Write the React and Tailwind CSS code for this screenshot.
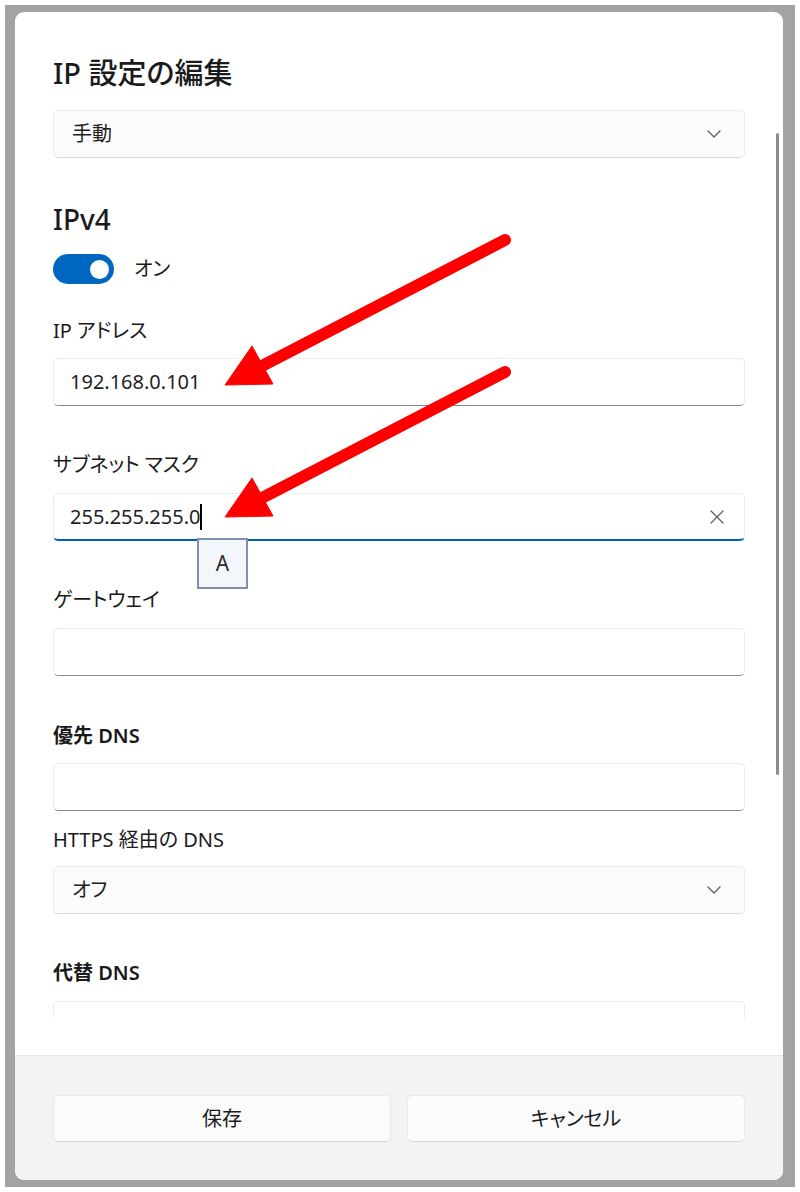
import React from "react";

function Chevron() {
  return (
    <svg width="14" height="8" viewBox="0 0 14 8" fill="none">
      <path d="M1 1 L7 7 L13 1" stroke="#5f5f5f" strokeWidth="1.3" strokeLinecap="round" strokeLinejoin="round" />
    </svg>
  );
}

function Label({ children, bold, className = "" }) {
  return (
    <div className={`h-[28px] leading-[28px] text-[20px] text-[#1a1a1a] ${bold ? "font-semibold" : ""} ${className}`}>
      {children}
    </div>
  );
}

function Input({ children, className = "", focused }) {
  return (
    <div
      className={`h-[48px] rounded-[5px] bg-white border border-[#ececec] ${
        focused ? "border-b-2 border-b-[#005fb8]" : "border-b-[#8a8a8a]"
      } flex items-center pl-[16px] pr-[20px] text-[20px] text-[#1f1f1f] ${className}`}
    >
      {children}
    </div>
  );
}

function Select({ value, className = "" }) {
  return (
    <div
      className={`h-[48px] rounded-[5px] bg-[#fbfbfb] border border-[#ececec] border-b-[#dadada] flex items-center justify-between pl-[18px] pr-[23px] text-[20px] text-[#1f1f1f] ${className}`}
    >
      <span>{value}</span>
      <Chevron />
    </div>
  );
}

export default function App() {
  return (
    <div className="relative w-[800px] h-[1192px] bg-white p-[5px] font-['Noto_Sans','Noto_Sans_CJK_JP',sans-serif] [font-feature-settings:'palt'] text-[#1a1a1a]">
      <div className="w-[790px] h-[1182px] bg-[#a3a3a5] pl-[10px] pt-[7px]">
        <div className="relative w-[768px] h-[1168px] bg-white rounded-[9px] overflow-hidden flex flex-col">
          <div className="h-[1006px] overflow-hidden px-[38px] pt-[41px] flex flex-col">
            <div className="h-[40px] leading-[40px] text-[29px] font-medium text-[#1b1b1b]">IP 設定の編集</div>
            <Select value="手動" className="mt-[17px] shrink-0" />
            <div className="mt-[43px] h-[36px] leading-[36px] text-[28px] font-medium text-[#1b1b1b]">IPv4</div>
            <div className="mt-[17px] h-[30px] flex items-center gap-[20px]">
              <div className="w-[61px] h-[30px] rounded-full bg-[#0067c0] flex items-center justify-end pr-[5px]">
                <div className="w-[19px] h-[19px] rounded-full bg-white" />
              </div>
              <span className="text-[20px] text-[#1b1b1b]">オン</span>
            </div>
            <Label className="mt-[33px]">IP アドレス</Label>
            <Input className="mt-[13px] shrink-0">192.168.0.101</Input>
            <Label className="mt-[45px]">サブネット マスク</Label>
            <Input className="mt-[14px] shrink-0 justify-between" focused>
              <span className="flex items-center">
                255.255.255.0
                <span className="inline-block w-[1.5px] h-[26px] bg-black" />
              </span>
              <svg width="14" height="14" viewBox="0 0 14 14" fill="none">
                <path d="M1 1 L13 13 M13 1 L1 13" stroke="#5f5f5f" strokeWidth="1.3" strokeLinecap="round" />
              </svg>
            </Input>
            <Label className="mt-[45px]">ゲートウェイ</Label>
            <Input className="mt-[14px] shrink-0" />
            <Label bold className="mt-[46px]">優先 DNS</Label>
            <Input className="mt-[13px] shrink-0 h-[47px]" />
            <Label className="mt-[15px]">HTTPS 経由の DNS</Label>
            <Select value="オフ" className="mt-[12px] shrink-0" />
            <Label bold className="mt-[45px]">代替 DNS</Label>
            <Input className="mt-[14px] shrink-0" />
          </div>
          <div className="h-[37px] shrink-0" />
          <div className="h-[125px] shrink-0 bg-[#f3f3f3] border-t border-[#e5e5e5] px-[38px] pt-[39px] flex gap-[16px]">
            <div className="flex-1 h-[47px] rounded-[5px] bg-[#fbfbfb] border border-[#e8e8e8] border-b-[#d5d5d5] flex items-center justify-center text-[20px] text-[#1b1b1b]">
              保存
            </div>
            <div className="flex-1 h-[47px] rounded-[5px] bg-[#fbfbfb] border border-[#e8e8e8] border-b-[#d5d5d5] flex items-center justify-center text-[20px] text-[#1b1b1b]">
              キャンセル
            </div>
          </div>
          <div className="absolute left-[761px] top-[121px] w-[3px] h-[642px] rounded-full bg-[#8a8a8a]" />
        </div>
      </div>

      <div className="absolute left-[197px] top-[538px] w-[51px] h-[51px] border-2 border-[#7f8fb2] bg-[#f3f6fb] flex items-center justify-center text-[21px] text-[#2b2b2b]">
        A
      </div>

      <svg className="absolute inset-0 pointer-events-none" width="800" height="1192" viewBox="0 0 800 1192">
        <g fill="#ff0000" stroke="#ff0000">
          <line x1="505" y1="240" x2="258" y2="368" strokeWidth="12" strokeLinecap="round" />
          <polygon points="225,385 252,346 273,384" strokeWidth="1" />
          <line x1="505" y1="372" x2="258" y2="500" strokeWidth="12" strokeLinecap="round" />
          <polygon points="225,517 252,478 273,516" strokeWidth="1" />
        </g>
      </svg>
    </div>
  );
}
